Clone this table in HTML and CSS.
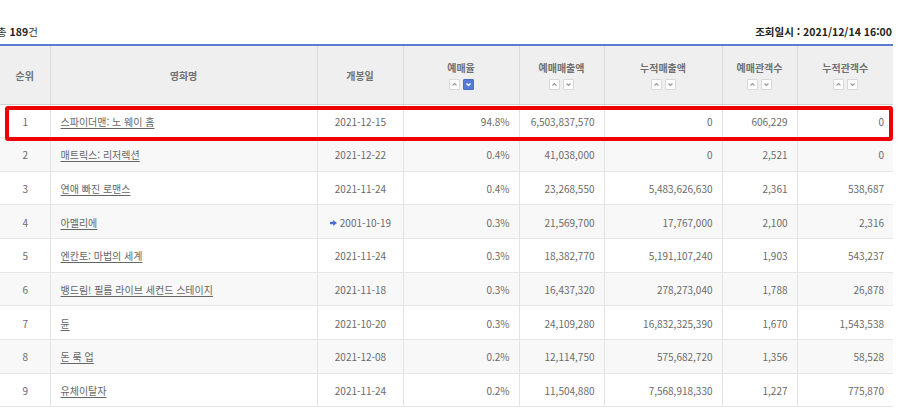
FILE: index.html
```html
<!DOCTYPE html>
<html lang="ko">
<head>
<meta charset="utf-8">
<title>예매율 순위</title>
<link rel="stylesheet" href="styles.css">
</head>
<body>
<div class="wrap">
  <div class="info">
    <p class="total">총 <b>189</b>건</p>
    <p class="stamp">조회일시 : 2021/12/14 16:00</p>
  </div>
  <table class="board">
    <colgroup>
      <col class="c-rank"><col class="c-title"><col class="c-date"><col class="c-rate"><col class="c-sales"><col class="c-acc"><col class="c-aud"><col class="c-accaud">
    </colgroup>
    <thead>
      <tr>
        <th>순위</th>
        <th>영화명</th>
        <th>개봉일</th>
        <th><div class="lbl">예매율</div><div class="sort"><span class="sb"><svg viewBox="0 0 11 11"><polyline points="3.5,6.5 5.5,4.5 7.5,6.5"/></svg></span><span class="sb on"><svg viewBox="0 0 11 11"><polyline points="3.5,4.5 5.5,6.5 7.5,4.5"/></svg></span></div></th>
        <th><div class="lbl">예매매출액</div><div class="sort"><span class="sb"><svg viewBox="0 0 11 11"><polyline points="3.5,6.5 5.5,4.5 7.5,6.5"/></svg></span><span class="sb"><svg viewBox="0 0 11 11"><polyline points="3.5,4.5 5.5,6.5 7.5,4.5"/></svg></span></div></th>
        <th><div class="lbl">누적매출액</div><div class="sort"><span class="sb"><svg viewBox="0 0 11 11"><polyline points="3.5,6.5 5.5,4.5 7.5,6.5"/></svg></span><span class="sb"><svg viewBox="0 0 11 11"><polyline points="3.5,4.5 5.5,6.5 7.5,4.5"/></svg></span></div></th>
        <th><div class="lbl">예매관객수</div><div class="sort"><span class="sb"><svg viewBox="0 0 11 11"><polyline points="3.5,6.5 5.5,4.5 7.5,6.5"/></svg></span><span class="sb"><svg viewBox="0 0 11 11"><polyline points="3.5,4.5 5.5,6.5 7.5,4.5"/></svg></span></div></th>
        <th><div class="lbl">누적관객수</div><div class="sort"><span class="sb"><svg viewBox="0 0 11 11"><polyline points="3.5,6.5 5.5,4.5 7.5,6.5"/></svg></span><span class="sb"><svg viewBox="0 0 11 11"><polyline points="3.5,4.5 5.5,6.5 7.5,4.5"/></svg></span></div></th>
      </tr>
    </thead>
    <tbody>
      <tr><td class="ctr">1</td><td class="ttl"><a href="#">스파이더맨: 노 웨이 홈</a></td><td class="ctr">2021-12-15</td><td class="num">94.8%</td><td class="num">6,503,837,570</td><td class="num">0</td><td class="num">606,229</td><td class="num">0</td></tr>
      <tr><td class="ctr">2</td><td class="ttl"><a href="#">매트릭스: 리저렉션</a></td><td class="ctr">2021-12-22</td><td class="num">0.4%</td><td class="num">41,038,000</td><td class="num">0</td><td class="num">2,521</td><td class="num">0</td></tr>
      <tr><td class="ctr">3</td><td class="ttl"><a href="#">연애 빠진 로맨스</a></td><td class="ctr">2021-11-24</td><td class="num">0.4%</td><td class="num">23,268,550</td><td class="num">5,483,626,630</td><td class="num">2,361</td><td class="num">538,687</td></tr>
      <tr><td class="ctr">4</td><td class="ttl"><a href="#">아멜리에</a></td><td class="ctr"><span class="re"><svg viewBox="0 0 7 6"><path d="M0 1.7H3.2V0L7 3 3.2 6V4.3H0Z"/></svg></span>2001-10-19</td><td class="num">0.3%</td><td class="num">21,569,700</td><td class="num">17,767,000</td><td class="num">2,100</td><td class="num">2,316</td></tr>
      <tr><td class="ctr">5</td><td class="ttl"><a href="#">엔칸토: 마법의 세계</a></td><td class="ctr">2021-11-24</td><td class="num">0.3%</td><td class="num">18,382,770</td><td class="num">5,191,107,240</td><td class="num">1,903</td><td class="num">543,237</td></tr>
      <tr><td class="ctr">6</td><td class="ttl"><a href="#">뱅드림! 필름 라이브 세컨드 스테이지</a></td><td class="ctr">2021-11-18</td><td class="num">0.3%</td><td class="num">16,437,320</td><td class="num">278,273,040</td><td class="num">1,788</td><td class="num">26,878</td></tr>
      <tr><td class="ctr">7</td><td class="ttl"><a href="#">듄</a></td><td class="ctr">2021-10-20</td><td class="num">0.3%</td><td class="num">24,109,280</td><td class="num">16,832,325,390</td><td class="num">1,670</td><td class="num">1,543,538</td></tr>
      <tr><td class="ctr">8</td><td class="ttl"><a href="#">돈 룩 업</a></td><td class="ctr">2021-12-08</td><td class="num">0.2%</td><td class="num">12,114,750</td><td class="num">575,682,720</td><td class="num">1,356</td><td class="num">58,528</td></tr>
      <tr><td class="ctr">9</td><td class="ttl"><a href="#">유체이탈자</a></td><td class="ctr">2021-11-24</td><td class="num">0.2%</td><td class="num">11,504,880</td><td class="num">7,568,918,330</td><td class="num">1,227</td><td class="num">775,870</td></tr>
    </tbody>
  </table>
  <div class="highlight"></div>
</div>
</body>
</html>
```

FILE: styles.css
```css
* { box-sizing: border-box; }
html, body { margin: 0; padding: 0; background: #fff; }
body {
  font-family: "Noto Sans CJK KR", "Noto Sans", sans-serif;
  font-size: 10px;
  color: #666;
  overflow: hidden;
}
.wrap {
  position: relative;
  width: 893px;
}
.info {
  height: 44px;
  display: flex;
  justify-content: space-between;
  align-items: flex-end;
  padding-bottom: 5px;
}
.info p { margin: 0; line-height: 14px; font-size: 10.5px; color: #333; }
.total { margin-left: -3px !important; }
.total b { font-weight: 700; color: #222; }
.stamp { font-weight: 700; color: #222 !important; margin-right: 1px !important; }

.board {
  width: 893px;
  border-collapse: collapse;
  table-layout: fixed;
  border-top: 2px solid #5b7bd2;
}
.c-rank { width: 50px; }
.c-title { width: 267px; }
.c-date { width: 86px; }
.c-rate { width: 116px; }
.c-sales { width: 85px; }
.c-acc { width: 118px; }
.c-aud { width: 75px; }
.c-accaud { width: 96px; }

.board th {
  height: 59px;
  background: #efefef;
  font-weight: 700;
  color: #707070;
  font-size: 10px;
  text-align: center;
  vertical-align: middle;
  border-left: 1px solid #dcdcdc;
  border-bottom: 1px solid #d2d2d2;
  padding: 2px 0 0;
}
.board th:first-child, .board td:first-child { border-left: none; }
.lbl { line-height: 14px; }
.sort {
  display: flex;
  justify-content: center;
  gap: 3px;
  margin-top: 4px;
}
.sb {
  width: 11px;
  height: 11px;
  border: 1px solid #d8d8d8;
  background: #fff;
  border-radius: 1px;
  display: block;
}
.sb svg { display: block; margin: -1px; width: 11px; height: 11px; }
.sb polyline { fill: none; stroke: #999; stroke-width: 1.1; }
.sb.on { background: #5579d6; border-color: #4a6cc8; }
.sb.on polyline { stroke: #fff; stroke-width: 1.3; }

.board tbody tr { height: 33.67px; }
.board tbody tr:nth-child(even) td { background: #f8f8f8; }
.board td {
  border-left: 1px solid #e2e2e2;
  border-bottom: 1px solid #e6e6e6;
  padding: 2px 9px 0 10px;
  line-height: 14px;
  white-space: nowrap;
  color: #6a6a6a;
}
.ctr { text-align: center; }
.num { text-align: right; }
.ttl a { color: #666; text-decoration: underline; text-underline-offset: 2px; }
.re { display: inline-block; width: 7px; height: 6px; margin-right: 3px; vertical-align: 1px; }
.re svg { width: 7px; height: 6px; display: block; }
.re path { fill: #4a6fd4; }

.highlight {
  position: absolute;
  left: 5px;
  top: 106px;
  width: 888px;
  height: 35px;
  border: 4px solid #ee0000;
  border-radius: 3px;
  pointer-events: none;
}
```
